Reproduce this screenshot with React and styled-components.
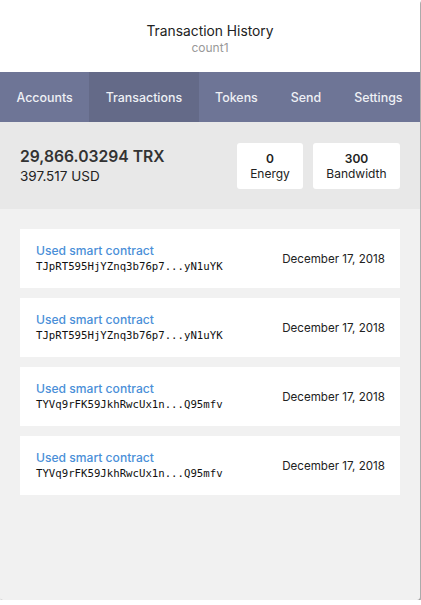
import React from "react";
import styled, { createGlobalStyle } from "styled-components";

const Global = createGlobalStyle`
  body {
    margin: 0;
    background: #ffffff;
    font-family: Inter, "Open Sans", sans-serif;
  }
`;

const tabs = ["Accounts", "Transactions", "Tokens", "Send", "Settings"];

const txs = [
  { addr: "TJpRT595HjYZnq3b76p7...yN1uYK", date: "December 17, 2018" },
  { addr: "TJpRT595HjYZnq3b76p7...yN1uYK", date: "December 17, 2018" },
  { addr: "TYVq9rFK59JkhRwcUx1n...Q95mfv", date: "December 17, 2018" },
  { addr: "TYVq9rFK59JkhRwcUx1n...Q95mfv", date: "December 17, 2018" },
];

const App = () => {
  return (
    <>
      <Global />
      <Panel>
        <Header>
          <Title>Transaction History</Title>
          <Sub>count1</Sub>
        </Header>
        <Nav>
          {tabs.map((t) => (
            <Tab key={t} active={t === "Transactions"}>
              {t}
            </Tab>
          ))}
        </Nav>
        <Balance>
          <div>
            <Trx>29,866.03294 TRX</Trx>
            <Usd>397.517 USD</Usd>
          </div>
          <Stats>
            <Stat>
              <b>0</b>
              <span>Energy</span>
            </Stat>
            <Stat wide>
              <b>300</b>
              <span>Bandwidth</span>
            </Stat>
          </Stats>
        </Balance>
        <List>
          {txs.map((tx, i) => (
            <Card key={i}>
              <div>
                <TxType>Used smart contract</TxType>
                <Addr>{tx.addr}</Addr>
              </div>
              <TxDate>{tx.date}</TxDate>
            </Card>
          ))}
        </List>
      </Panel>
    </>
  );
};

const Panel = styled.div`
  width: 420px;
  height: 600px;
  display: flex;
  flex-direction: column;
  background: #f1f1f1;
  box-shadow: 1px 2px 2px rgba(0, 0, 0, 0.45);
  border-radius: 0 0 3px 3px;
  overflow: hidden;
`;

const Header = styled.div`
  height: 72px;
  background: #fff;
  display: flex;
  flex-direction: column;
  align-items: center;
  justify-content: center;
  padding-top: 4px;
  box-sizing: border-box;
`;

const Title = styled.div`
  font-size: 13.8px;
  color: #222;
  line-height: 18px;
`;

const Sub = styled.div`
  font-size: 12px;
  color: #999;
  line-height: 15px;
`;

const Nav = styled.div`
  height: 50px;
  display: flex;
  background: #6e7596;
`;

const Tab = styled.div`
  display: flex;
  align-items: center;
  padding: 0 16.5px;
  font-size: 12.4px;
  font-weight: 500;
  color: #eef0f5;
  background: ${(p) => (p.active ? "#646a88" : "transparent")};
`;

const Balance = styled.div`
  height: 87px;
  background: #e8e8e8;
  display: flex;
  align-items: center;
  justify-content: space-between;
  padding: 0 20px;
  box-sizing: border-box;
`;

const Trx = styled.div`
  font-size: 15.7px;
  font-weight: 600;
  color: #333;
  line-height: 20px;
`;

const Usd = styled.div`
  font-size: 13.5px;
  color: #222;
  line-height: 18px;
`;

const Stats = styled.div`
  display: flex;
  gap: 10px;
`;

const Stat = styled.div`
  width: ${(p) => (p.wide ? "87px" : "66px")};
  height: 46px;
  background: #fff;
  border-radius: 3px;
  display: flex;
  flex-direction: column;
  align-items: center;
  justify-content: center;
  font-size: 12px;
  color: #222;
  line-height: 15px;

  b {
    font-weight: 600;
  }
`;

const List = styled.div`
  display: flex;
  flex-direction: column;
  gap: 10px;
  padding: 20px;
`;

const Card = styled.div`
  height: 59px;
  background: #fff;
  display: flex;
  align-items: center;
  justify-content: space-between;
  padding: 0 15px 0 16px;
`;

const TxType = styled.div`
  font-size: 12.1px;
  font-weight: 500;
  color: #4a8fd8;
  line-height: 16px;
`;

const Addr = styled.div`
  font-family: "DejaVu Sans Mono", "Liberation Mono", monospace;
  font-size: 10.7px;
  color: #111;
  line-height: 16px;
`;

const TxDate = styled.div`
  font-size: 11.6px;
  color: #222;
`;

export default App;
